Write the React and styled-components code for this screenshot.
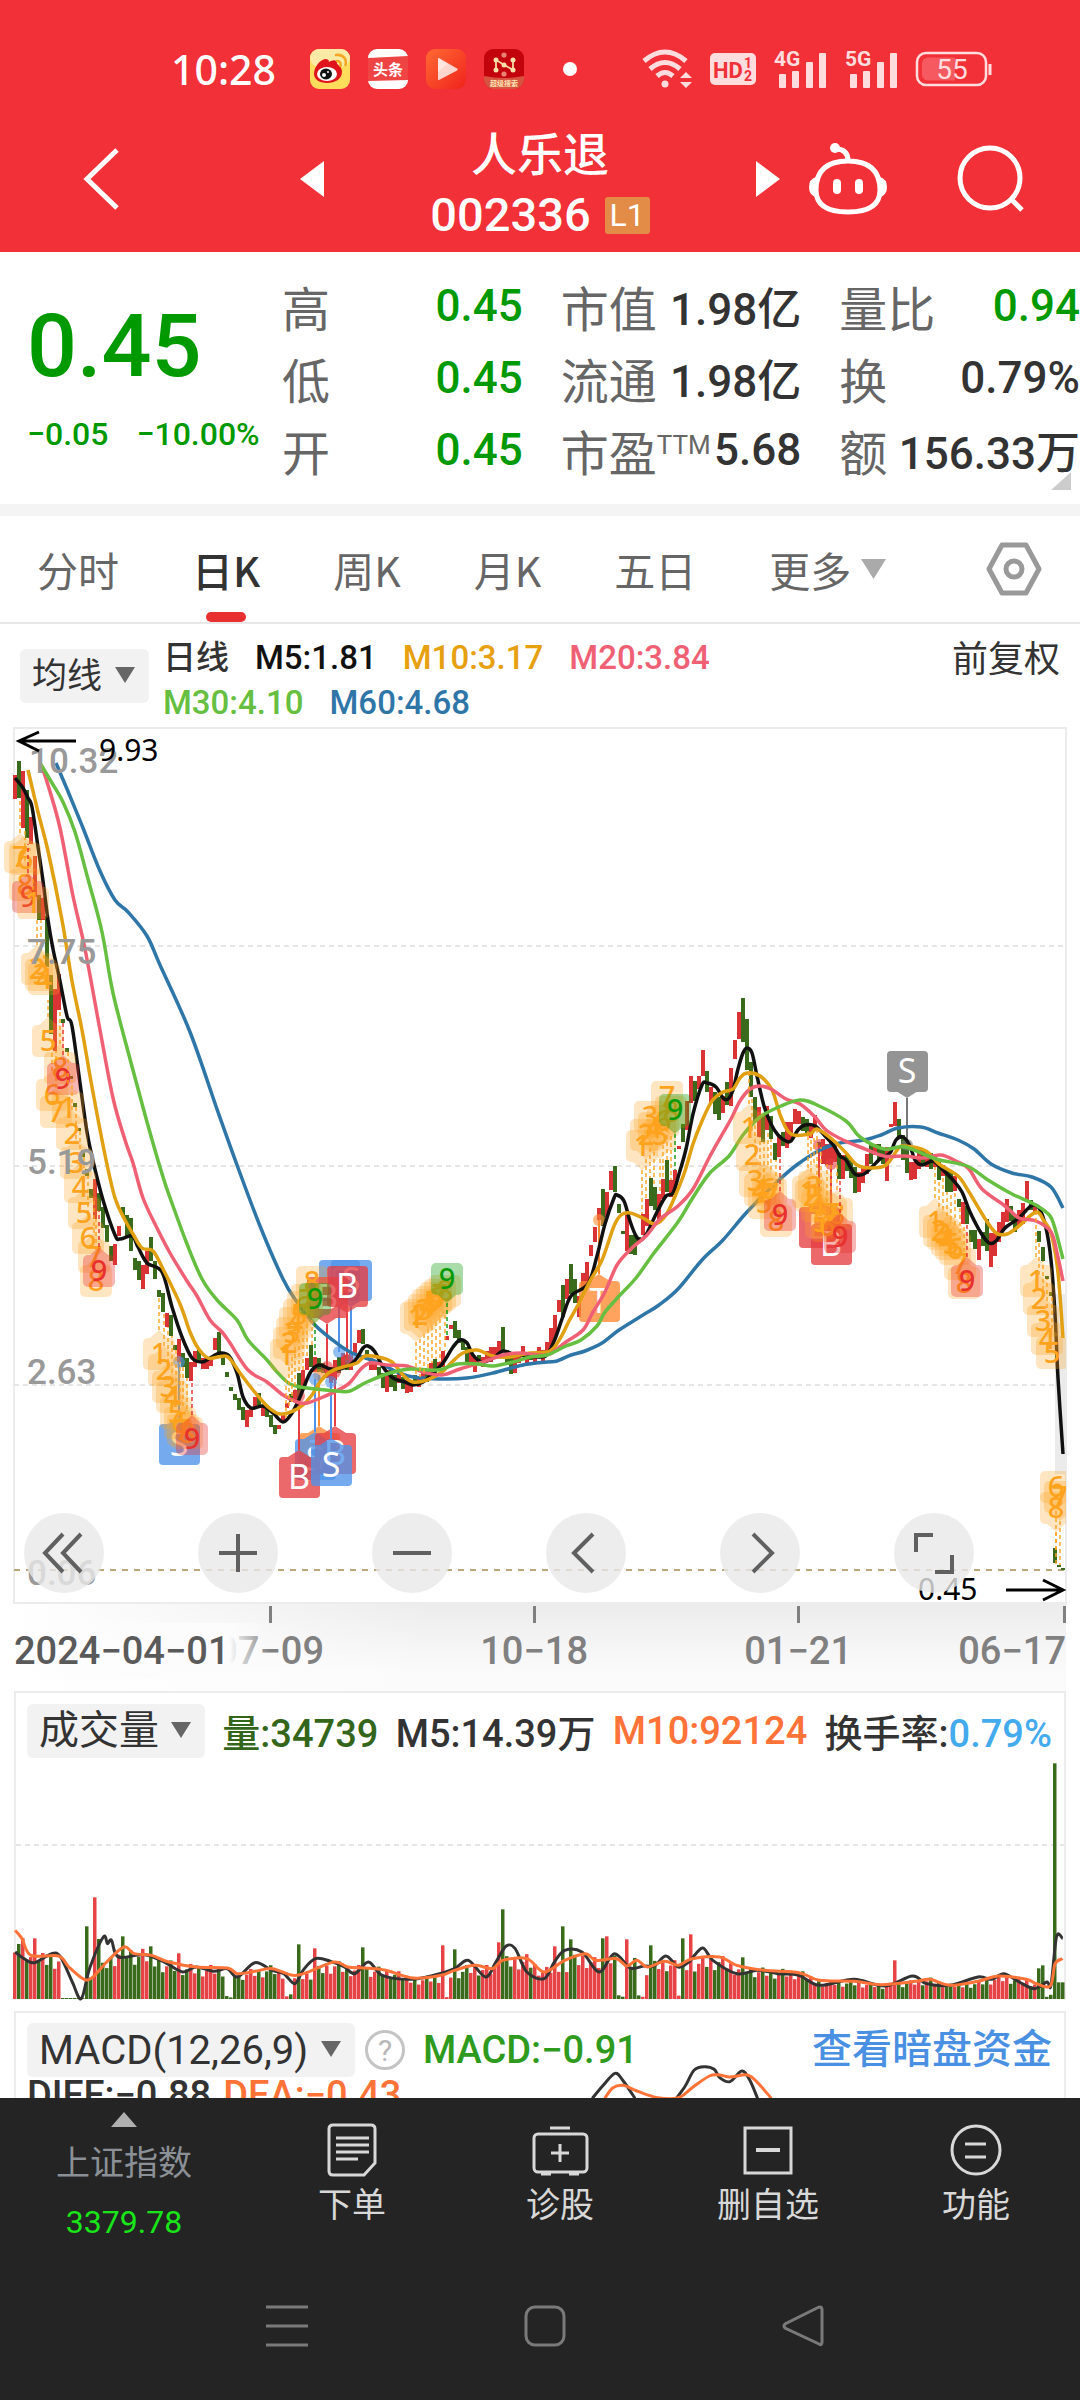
import React from "react";
import styled, { createGlobalStyle } from "styled-components";

const GlobalStyle = createGlobalStyle`
  * {
    box-sizing: border-box;
  }

  body {
    margin: 0;
    background: #ffffff;
    color: #333333;
    font-family: Roboto, "Noto Sans CJK SC", sans-serif;
    font-size: 36px;
  }

  button,
  select {
    font: inherit;
    color: inherit;
    border: none;
    background: none;
    padding: 0;
    margin: 0;
    cursor: pointer;
  }

  a {
    text-decoration: none;
  }

  svg {
    display: block;
    overflow: visible;
  }
`;

const Screen = styled.div`
  display: flex;
  flex-direction: column;
  height: 100vh;
  min-height: 800px;
`;

/* ---------- top ---------- */

const Top = styled.header`
  background: #f23037;
  color: #ffffff;
`;

const StatusBar = styled.div`
  display: flex;
  align-items: center;
  justify-content: space-between;
  height: 110px;
  padding: 28px 88px 0 171px;
`;

const StatusGroup = styled.div`
  display: flex;
  align-items: center;
  gap: ${({ $gap }) => $gap}px;
`;

const Clock = styled.time`
  font-family: "Noto Sans", sans-serif;
  font-weight: 500;
  font-size: 41px;
  width: 121px;
`;

const Dot = styled.span`
  width: 14px;
  height: 14px;
  margin-left: 21px;
  border-radius: 50%;
  background: #ffffff;
`;

const TitleBar = styled.div`
  display: grid;
  grid-template-columns: 1fr 480px 1fr;
  align-items: center;
  height: 142px;
  padding-bottom: 4px;
`;

const TitleSide = styled.div`
  display: flex;
  align-items: center;
  justify-content: space-between;
  padding: 0 ${({ $right }) => $right}px 0 ${({ $left }) => $left}px;
`;

const TitleCenter = styled.div`
  display: flex;
  align-items: center;
  justify-content: space-between;
`;

const StockTitle = styled.h1`
  margin: 0;
  padding-top: 12px;
  text-align: center;
  font-weight: 500;
  font-size: 46px;
  line-height: 60px;
`;

const StockCode = styled.div`
  display: flex;
  align-items: center;
  gap: 14px;
  font-size: 47px;
`;

const LevelBadge = styled.span`
  width: 45px;
  height: 37px;
  border-radius: 3px;
  background: #e28c47;
  font-weight: 400;
  font-size: 32px;
  line-height: 37px;
`;

/* ---------- quote ---------- */

const Quote = styled.section`
  position: relative;
  display: flex;
  height: 264px;
  border-bottom: 12px solid #f4f4f4;
`;

const PriceBlock = styled.div`
  width: 282px;
  padding: 46px 0 0 27px;
  color: #009900;
  white-space: nowrap;
`;

const Price = styled.div`
  font-weight: 500;
  font-size: 88px;
  line-height: 96px;
`;

const Change = styled.div`
  display: flex;
  gap: 28px;
  padding-top: 16px;
  font-size: 32px;
  font-weight: 500;
  line-height: 48px;
`;

const Stats = styled.dl`
  display: grid;
  flex: 1;
  grid-template-columns: repeat(3, minmax(0, 1fr));
  grid-template-rows: repeat(3, 72px);
  column-gap: 38px;
  margin: 0;
  padding-top: 18px;
`;

const Stat = styled.div`
  display: flex;
  align-items: center;
  justify-content: space-between;
  white-space: nowrap;

  dt {
    color: #666666;
    font-size: 48px;
  }

  dd {
    margin: 0;
    color: ${({ $down }) => ($down ? "#009900" : "#333333")};
    font-size: 44px;
    font-weight: 500;
  }

  sup {
    font-size: 26px;
    line-height: 26px;
  }
`;

const Corner = styled.span`
  position: absolute;
  right: 9px;
  bottom: 14px;
  border-left: 20px solid transparent;
  border-bottom: 18px solid #cccccc;
`;

/* ---------- tabs ---------- */

const Tabs = styled.nav`
  display: flex;
  align-items: center;
  gap: 73px;
  height: 108px;
  padding: 0 38px 0 37px;
  border-bottom: 2px solid #e8e8e8;
`;

const Tab = styled.button`
  position: relative;
  display: flex;
  align-items: center;
  gap: 10px;
  height: 100%;
  color: ${({ $active }) => ($active ? "#333333" : "#666666")};
  font-family: "Noto Sans CJK SC", sans-serif;
  font-weight: ${({ $active }) => ($active ? 500 : 400)};
  font-size: 41px;
  white-space: nowrap;

  &::after {
    content: "";
    display: ${({ $active }) => ($active ? "block" : "none")};
    position: absolute;
    left: calc(50% - 20px);
    bottom: 0;
    width: 40px;
    height: 10px;
    border-radius: 5px;
    background: #e93030;
  }
`;

const Settings = styled.button`
  margin-left: auto;
`;

/* ---------- indicators ---------- */

const Picker = styled.label`
  position: relative;
  flex: none;
  height: 54px;
  border-radius: 6px;
  background: #f2f2f2;

  select {
    appearance: none;
    height: 100%;
    padding: 0 46px 0 12px;
    outline: none;
    font-size: ${({ $size }) => $size}px;
  }

  svg {
    position: absolute;
    right: 14px;
    top: 18px;
    pointer-events: none;
  }
`;

const Averages = styled.div`
  display: flex;
  height: 103px;
  padding: 0 20px;
`;

const AveragePicker = styled.div`
  display: flex;
  padding-top: 25px;
`;

const AverageList = styled.div`
  display: flex;
  flex-wrap: wrap;
  align-content: flex-start;
  column-gap: 26px;
  width: 590px;
  padding: 11px 0 0 14px;
  font-size: 33px;
  line-height: 45px;
`;

const Value = styled.span`
  color: ${({ $color }) => $color};
  font-weight: 500;
  white-space: nowrap;
`;

const Adjust = styled.button`
  align-self: flex-start;
  margin-left: auto;
  margin-top: 6px;
  font-size: 36px;
`;

/* ---------- charts ---------- */

const Body = styled.main`
  flex: 1;
  min-height: 0;
  overflow: hidden;
`;

const ChartWrap = styled.section`
  position: relative;
`;

const ChartSvg = styled.svg`
  width: 100%;
  height: auto;
`;

const Controls = styled.div`
  position: absolute;
  left: 24px;
  right: 106px;
  bottom: 11px;
  display: flex;
  justify-content: space-between;
`;

const Control = styled.button`
  display: grid;
  place-items: center;
  width: 80px;
  height: 80px;
  border-radius: 50%;
  background: rgba(232, 232, 232, 0.8);
`;

const DateAxis = styled.div`
  position: relative;
  display: grid;
  grid-template-columns: 310fr 264fr 264fr 214fr;
  height: 87px;
  margin: 0 14px;
  background: linear-gradient(90deg, #ffffff 0%, rgba(255, 255, 255, 0) 40%),
    linear-gradient(180deg, #ececec 0%, #fbfbfb 80%);
  color: #808080;
  font-size: 38px;
  font-weight: 500;
  line-height: 56px;
`;

const StartDate = styled.span`
  position: absolute;
  left: 0;
  top: 19px;
  padding-right: 40px;
  background: linear-gradient(90deg, rgba(252, 252, 252, 0) 0%, #fcfcfc 60%, #fcfcfc 84%, rgba(252, 252, 252, 0) 100%);
  color: #5a5a5a;
`;

const DateMark = styled.span`
  position: relative;
  padding-top: 19px;
  text-align: right;
  white-space: nowrap;

  &::before {
    content: "";
    position: absolute;
    top: 2px;
    right: ${({ $tick }) => $tick || 0}px;
    width: 3px;
    height: 17px;
    background: #808080;
  }
`;

const Panel = styled.section`
  margin: 0 14px ${({ $gap }) => $gap || 0}px;
  border: 2px solid #ececec;
  border-bottom: none;
`;

const PanelHead = styled.div`
  display: flex;
  align-items: center;
  justify-content: space-between;
  padding: 10px 12px 0 11px;
  font-size: 38px;
  white-space: nowrap;
`;

const HeadGroup = styled.div`
  display: flex;
  align-items: center;
`;

const Help = styled.button`
  width: 40px;
  height: 40px;
  margin: 0 18px 0 10px;
  border: 3px solid #c4c4c4;
  border-radius: 50%;
  color: #b8b8b8;
  font-size: 30px;
  line-height: 33px;
`;

const DarkPool = styled.a`
  color: #4a90e2;
  font-size: 40px;
  font-weight: 500;
  line-height: 54px;
`;

const MacdBody = styled.div`
  position: relative;
  display: flex;
  gap: 12px;
  padding-left: 11px;
  font-size: 38px;
  line-height: 36px;
`;

const MacdSvg = styled.svg`
  position: absolute;
  left: 0;
  bottom: 0;
  width: 100%;
  height: auto;
`;

/* ---------- bottom ---------- */

const Bottom = styled.footer`
  flex: none;
  background: #242424;
`;

const Actions = styled.nav`
  display: grid;
  grid-template-columns: 248px repeat(4, 1fr);
  height: 156px;
`;

const Action = styled.button`
  display: flex;
  flex-direction: column;
  align-items: center;
  gap: 2px;
  padding-top: 24px;
  color: #d8d8d8;
  font-size: 34px;
  line-height: 50px;
`;

const ActionIcon = styled.svg`
  width: 56px;
  height: 56px;
`;

const IndexLink = styled.a`
  display: flex;
  flex-direction: column;
  align-items: center;
  padding-top: 14px;
  color: #8b9096;
  font-size: 34px;
  line-height: 50px;

  strong {
    padding-top: 9px;
    color: #19e619;
    font-weight: 400;
    font-size: 32px;
  }

  svg {
    margin-bottom: 11px;
  }
`;

const SystemNav = styled.div`
  display: flex;
  align-items: center;
  justify-content: space-between;
  height: 146px;
  padding: 0 256px 2px 266px;
`;

/* ---------- data ---------- */

const averages = [
  { label: "日线", color: "#333333" },
  { label: "M5:1.81", color: "#111111" },
  { label: "M10:3.17", color: "#e6a010" },
  { label: "M20:3.84", color: "#f06075" },
  { label: "M30:4.10", color: "#66bf40" },
  { label: "M60:4.68", color: "#2f76a8" },
];

const stats = [
  { name: "高", value: "0.45", down: true },
  { name: "市值", value: "1.98亿" },
  { name: "量比", value: "0.94", down: true },
  { name: "低", value: "0.45", down: true },
  { name: "流通", value: "1.98亿" },
  { name: "换", value: "0.79%" },
  { name: "开", value: "0.45", down: true },
  { name: "市盈", sup: "TTM", value: "5.68" },
  { name: "额", value: "156.33万" },
];

// colour, x, top, bottom
const candles = `r15 775 799,g19 761 798,r23 771 828,g27 790 838,r31 817 844,r35 856 897,g39 895 920,r43 898 920,g47 916 967,g51 975 1034,r55 989 1051,r59 974 1010,g63 1019 1023,g67 1048 1052,g71 1076 1079,g75 1103 1107,g79 1128 1131,g83 1150 1157,g87 1169 1176,g91 1189 1198,r95 1179 1219,g99 1193 1211,g103 1207 1228,g107 1225 1242,g111 1246 1261,r115 1244 1265,r119 1226 1236,g123 1207 1216,g127 1215 1238,g131 1218 1251,g135 1258 1270,g139 1261 1280,r143 1265 1289,r147 1251 1274,g151 1237 1261,g155 1261 1279,g159 1290 1297,g163 1293 1312,r167 1313 1327,g171 1315 1336,g175 1345 1350,r179 1339 1362,g183 1353 1367,g187 1358 1378,r191 1362 1381,r195 1351 1367,g199 1349 1363,r203 1358 1369,r207 1358 1369,r211 1357 1366,r215 1338 1350,g219 1332 1355,g223 1352 1365,g227 1372 1377,g231 1387 1391,g235 1394 1400,g239 1398 1410,g243 1407 1420,r247 1410 1427,r251 1408 1417,r255 1397 1407,g259 1393 1405,r263 1405 1416,g267 1405 1417,g271 1415 1427,g275 1425 1434,r279 1425 1429,r283 1415 1420,r287 1403 1408,g291 1394 1402,r295 1390 1400,g299 1373 1398,r303 1370 1390,r307 1358 1370,g311 1345 1367,r315 1357 1372,g319 1358 1372,g323 1363 1373,r327 1367 1378,r331 1367 1383,r335 1360 1380,g339 1357 1373,r343 1353 1367,g347 1355 1370,r351 1352 1370,r355 1343 1355,r359 1330 1343,g363 1329 1344,g367 1350 1360,r371 1358 1370,r375 1362 1370,g379 1367 1377,g383 1373 1388,r387 1370 1392,g391 1368 1387,g395 1375 1391,r399 1370 1383,g403 1377 1389,r407 1380 1393,r411 1380 1392,g415 1375 1383,r419 1377 1387,r423 1373 1383,g427 1370 1382,r431 1363 1377,g435 1359 1375,r439 1362 1370,r443 1351 1367,r447 1336 1340,r451 1325 1329,g455 1321 1338,g459 1330 1343,g463 1339 1350,g467 1347 1363,r471 1352 1365,r475 1357 1372,g479 1355 1365,r483 1357 1367,r487 1351 1362,r491 1347 1362,r495 1347 1357,r499 1341 1355,g503 1327 1350,g507 1350 1365,g511 1353 1374,r515 1353 1373,r519 1352 1363,r523 1346 1357,r527 1352 1363,g531 1353 1360,r535 1352 1363,r539 1347 1358,r543 1350 1362,r547 1342 1355,r551 1328 1347,r555 1315 1339,r559 1300 1312,g563 1285 1317,r567 1279 1299,g571 1264 1294,g575 1279 1303,r579 1296 1317,r583 1273 1287,r587 1262 1285,r591 1245 1256,r595 1227 1242,r599 1208 1220,g603 1189 1226,r607 1192 1217,r611 1171 1190,g615 1166 1192,g619 1204 1213,g623 1231 1234,r627 1215 1251,g631 1235 1254,g635 1235 1255,g639 1237 1242,r643 1214 1235,r647 1199 1226,g651 1178 1206,g655 1187 1210,r659 1194 1219,r663 1179 1199,g667 1160 1192,r671 1180 1197,r675 1170 1192,r679 1146 1149,g683 1124 1142,r687 1101 1130,r691 1076 1103,g695 1081 1101,r699 1076 1089,r703 1050 1076,g707 1071 1092,r711 1087 1103,g715 1092 1114,g719 1097 1120,r723 1096 1113,g727 1082 1105,r731 1068 1106,r735 1040 1059,r739 1012 1039,g743 998 1042,g747 1019 1070,g751 1062 1097,g755 1097 1122,r759 1107 1137,g763 1114 1142,r767 1106 1130,g771 1116 1139,g775 1143 1160,r779 1137 1157,g783 1132 1146,r787 1122 1148,r791 1122 1140,r795 1109 1124,r799 1111 1124,g803 1117 1131,g807 1119 1135,r811 1124 1138,r815 1115 1130,g819 1142 1147,r823 1139 1164,r827 1144 1165,r831 1139 1165,r835 1146 1162,g839 1153 1179,r843 1155 1179,g847 1155 1171,g851 1160 1178,g855 1167 1193,r859 1172 1192,r863 1167 1183,r867 1154 1174,g871 1144 1164,r875 1144 1155,g879 1144 1160,g883 1149 1164,r887 1147 1181,r891 1124 1127,r895 1102 1126,g899 1119 1139,g903 1135 1160,g907 1140 1173,r911 1162 1180,r915 1162 1179,r919 1147 1169,g923 1149 1165,r927 1151 1167,g931 1153 1169,r935 1155 1167,g939 1162 1180,r943 1165 1176,g947 1169 1192,g951 1171 1192,r955 1176 1191,g959 1199 1207,r963 1202 1224,g967 1206 1224,g971 1230 1242,g975 1230 1249,r979 1239 1260,g983 1232 1246,g987 1219 1251,r991 1233 1267,r995 1233 1256,r999 1222 1242,r1003 1212 1231,r1007 1199 1222,g1011 1206 1221,g1015 1215 1232,r1019 1210 1225,r1023 1203 1224,r1027 1181 1201,g1031 1200 1210,r1035 1205 1212,g1039 1231 1242,g1043 1247 1261,g1047 1276 1279,g1051 1292 1296,g1055 1548 1563,g1059 1565 1567,g1063 1568 1570`
  .split(",")
  .map((item) => {
    const [x, top, bottom] = item.slice(1).split(" ").map(Number);
    return { up: item[0] === "r", x, top, bottom };
  });

const lines = [
  {
    color: "#2f76a8",
    points:
      "56,763 67,789 83,828 100,871 115,900 128,912 147,936 160,965 190,1032 218,1112 237,1165 260,1226 283,1279 297,1302 313,1323 330,1338 350,1352 377,1362 397,1372 413,1377 440,1379 467,1378 493,1373 523,1365 547,1362 557,1361 571,1355 585,1351 602,1343 619,1330 643,1315 659,1305 678,1289 702,1260 723,1240 747,1212 778,1181 798,1164 822,1149 840,1143 864,1140 881,1135 898,1128 921,1127 938,1133 958,1140 974,1149 991,1164 1012,1173 1032,1177 1051,1187 1063,1208",
  },
  {
    color: "#111111",
    points:
      "15,778 23,788 28,798 32,807 38,847 43,881 48,920 53,949 60,981 67,1016 72,1026 80,1083 87,1132 93,1161 103,1200 115,1235 120,1239 132,1236 138,1247 147,1263 162,1272 172,1307 182,1337 192,1358 202,1362 210,1358 220,1353 229,1356 237,1373 243,1397 251,1408 263,1406 273,1413 283,1422 292,1413 300,1397 310,1373 319,1365 330,1369 340,1369 350,1365 357,1358 363,1348 368,1346 375,1352 383,1367 393,1378 405,1382 413,1385 423,1382 433,1373 443,1363 453,1347 460,1340 467,1343 473,1355 482,1362 493,1358 503,1351 513,1354 527,1356 540,1357 547,1355 555,1339 562,1319 571,1296 588,1284 597,1256 605,1224 614,1198 617,1195 624,1201 630,1221 636,1236 641,1240 647,1233 657,1212 666,1196 673,1193 679,1174 686,1149 693,1114 702,1085 707,1083 716,1087 723,1098 728,1099 733,1090 738,1069 743,1053 747,1048 752,1053 757,1076 764,1106 771,1124 778,1135 786,1141 791,1141 798,1130 805,1125 815,1126 826,1137 834,1146 840,1156 846,1160 855,1174 864,1174 872,1167 881,1158 890,1153 896,1140 903,1137 910,1146 915,1160 922,1165 933,1161 941,1168 953,1180 962,1192 970,1212 981,1233 989,1243 996,1241 1005,1228 1019,1218 1031,1206 1039,1208 1046,1228 1051,1260 1055,1314 1058,1378 1063,1454",
  },
  {
    color: "#e0a012",
    points:
      "28,770 38,812 48,851 62,920 72,981 82,1030 92,1087 105,1155 115,1198 125,1220 133,1234 142,1248 153,1251 163,1269 180,1304 190,1332 198,1348 208,1358 218,1357 228,1357 240,1373 253,1390 268,1407 280,1414 293,1411 303,1405 312,1395 320,1382 330,1372 343,1367 357,1363 365,1356 378,1357 392,1362 403,1375 413,1382 427,1380 442,1372 452,1362 463,1353 477,1350 493,1356 510,1357 530,1353 550,1351 561,1337 569,1321 578,1305 590,1281 602,1260 614,1226 621,1215 630,1213 643,1218 655,1224 666,1215 676,1194 685,1171 693,1144 702,1121 712,1101 723,1092 733,1089 740,1078 747,1073 760,1076 772,1090 781,1117 791,1134 810,1134 817,1129 833,1140 846,1153 857,1165 871,1168 886,1165 898,1149 905,1146 926,1151 939,1164 958,1176 969,1192 984,1217 996,1233 1007,1234 1019,1226 1036,1212 1044,1221 1051,1233 1057,1264 1060,1296 1063,1338",
  },
  {
    color: "#f06075",
    points:
      "42,767 48,785 60,828 73,896 85,949 100,1030 113,1098 125,1140 133,1163 143,1198 157,1228 170,1253 187,1281 197,1296 210,1320 222,1332 230,1343 248,1370 267,1382 283,1395 297,1402 307,1403 323,1397 347,1385 360,1370 370,1363 387,1365 407,1366 423,1372 442,1375 460,1369 483,1362 503,1355 520,1353 540,1355 550,1354 566,1342 583,1330 593,1312 605,1292 617,1265 631,1249 647,1235 660,1219 678,1206 693,1189 709,1158 723,1133 731,1119 740,1101 750,1089 760,1086 771,1089 786,1099 800,1104 815,1117 826,1130 843,1140 860,1147 884,1156 905,1156 922,1158 941,1155 958,1162 969,1169 982,1189 1005,1206 1019,1218 1036,1221 1051,1232 1057,1253 1063,1281",
  },
  {
    color: "#66bf40",
    points:
      "40,763 52,783 63,802 75,832 88,879 102,932 113,993 130,1059 147,1122 163,1177 173,1206 187,1244 202,1279 217,1300 237,1320 248,1340 267,1360 277,1372 290,1384 307,1388 337,1391 350,1391 367,1382 390,1373 410,1369 437,1370 457,1364 477,1364 493,1366 513,1362 530,1357 547,1355 566,1346 581,1340 597,1326 605,1312 621,1294 636,1278 654,1253 678,1222 692,1199 709,1174 729,1156 743,1135 760,1117 781,1106 800,1100 817,1105 846,1121 860,1137 884,1149 905,1147 936,1159 967,1166 988,1180 1012,1194 1032,1203 1046,1212 1053,1222 1063,1259",
  },
];

// [digit, x, y, end of the dotted stem]
const turns = [
  [7, 20, 857, 800], [6, 25, 859, 828], [8, 25, 885, 838], [9, 28, 897, 844], [1, 33, 903, 897],
  [2, 37, 969, 920], [3, 41, 975, 920], [4, 44, 979, 967], [5, 48, 1041, 1000], [8, 60, 1068, 1010],
  [6, 52, 1095, 1040], [7, 56, 1112, 1051], [9, 63, 1079, 1023], [1, 68, 1108, 1052], [2, 72, 1134, 1080],
  [3, 76, 1163, 1107], [4, 80, 1187, 1131], [5, 84, 1213, 1157], [6, 88, 1238, 1176], [7, 94, 1257, 1198],
  [8, 96, 1281, 1219], [9, 99, 1271, 1211],
  [1, 159, 1354, 1297], [2, 164, 1370, 1312], [3, 168, 1387, 1327], [4, 172, 1397, 1336], [5, 176, 1413, 1350],
  [6, 180, 1423, 1362], [7, 183, 1430, 1367], [8, 187, 1433, 1378], [9, 192, 1439, 1381],
  [1, 286, 1355, 1420], [2, 289, 1343, 1408], [3, 292, 1333, 1402], [4, 295, 1323, 1390], [5, 299, 1315, 1373],
  [6, 303, 1307, 1370], [7, 307, 1300, 1358], [8, 312, 1282, 1345], [9, 315, 1299, 1357],
  [1, 416, 1318, 1375], [2, 420, 1315, 1377], [3, 424, 1310, 1373], [4, 428, 1305, 1370], [5, 432, 1302, 1363],
  [6, 436, 1298, 1359], [7, 440, 1295, 1362], [8, 445, 1291, 1351], [9, 447, 1279, 1336],
  [1, 642, 1146, 1214], [2, 646, 1135, 1199], [3, 650, 1117, 1178], [4, 654, 1128, 1187], [5, 660, 1135, 1194],
  [6, 663, 1121, 1179], [7, 667, 1097, 1160], [8, 671, 1112, 1180], [9, 675, 1110, 1170],
  [1, 749, 1128, 1070], [2, 752, 1155, 1097], [3, 755, 1181, 1122], [4, 760, 1190, 1137], [5, 764, 1203, 1142],
  [6, 768, 1189, 1130], [7, 771, 1194, 1139], [8, 776, 1221, 1160], [9, 780, 1215, 1157],
  [1, 808, 1192, 1131], [2, 811, 1196, 1135], [3, 814, 1187, 1138], [4, 817, 1206, 1130], [5, 821, 1222, 1147],
  [6, 827, 1226, 1164], [7, 831, 1214, 1165], [8, 837, 1214, 1162], [9, 840, 1237, 1179],
  [1, 935, 1222, 1167], [2, 939, 1231, 1180], [3, 943, 1234, 1176], [4, 947, 1240, 1192], [5, 951, 1244, 1192],
  [6, 955, 1249, 1191], [7, 960, 1264, 1207], [8, 964, 1283, 1224], [9, 967, 1281, 1224],
  [1, 1036, 1281, 1212], [2, 1039, 1299, 1242], [3, 1043, 1321, 1261], [4, 1047, 1339, 1279], [5, 1052, 1353, 1296],
  [6, 1056, 1487, 1550], [7, 1060, 1497, 1565], [8, 1056, 1508, 1567],
];

// [letter, x, y, stem end, colour]
const trades = [
  ["S", 179, 1444, 1362, "#4f94ea"],
  ["S", 339, 1280, 1352, "#4f94ea"],
  ["S", 351, 1280, 1360, "#4f94ea"],
  ["B", 327, 1297, 1367, "#e63e42"],
  ["B", 347, 1286, 1360, "#e63e42"],
  ["T", 319, 1453, 1375, "#ff8a33"],
  ["S", 315, 1459, 1379, "#4f94ea"],
  ["B", 335, 1453, 1372, "#e63e42"],
  ["B", 299, 1477, 1396, "#e63e42"],
  ["S", 331, 1465, 1382, "#4f94ea"],
  ["T", 599, 1301, 1220, "#ff8a33"],
  ["B", 819, 1227, 1145, "#e63e42"],
  ["B", 831, 1244, 1164, "#e63e42"],
  ["S", 907, 1071, 1145, "#777777"],
];

const volumeM5 =
  "22,780 35,800 50,812 75,785 88,795 105,870 118,920 130,830 150,735 156,755 162,745 172,795 210,788 240,812 265,840 285,825 310,838 330,830 345,855 370,812 395,835 412,845 428,875 440,835 458,800 480,808 500,825 515,845 535,810 555,850 595,862 630,850 660,830 680,805 705,855 720,810 735,762 748,770 765,840 790,860 805,810 820,775 845,780 870,840 892,785 915,828 935,822 950,822 967,792 985,825 1000,810 1020,768 1035,805 1070,845 1100,835 1130,845 1160,850 1190,880 1240,862 1285,882 1325,852 1345,875 1380,880 1420,855 1440,862 1458,845 1480,870 1502,890 1520,870 1526,880 1534,735 1543,740";
const volumeM10 =
  "22,715 32,740 45,790 85,792 100,825 122,862 135,855 155,810 180,765 195,785 220,790 245,810 285,825 330,828 345,845 370,838 395,830 425,850 445,842 485,810 505,825 530,828 560,835 600,858 640,850 660,835 690,820 715,830 730,805 765,800 790,840 820,805 850,785 865,805 895,800 910,822 925,805 940,825 965,808 985,820 1005,800 1045,795 1070,820 1110,835 1160,842 1190,865 1240,868 1280,878 1330,868 1350,862 1380,880 1420,868 1450,852 1490,862 1505,875 1525,882 1532,815 1543,800";
const volumeSpikes = {
  51: 738, 126: 702, 138: 615, 143: 740, 178: 732, 219: 762, 260: 783, 433: 756, 457: 768, 527: 765, 643: 759,
  660: 771, 724: 750, 730: 651, 805: 762, 817: 702, 829: 741, 875: 738, 881: 732, 910: 741, 945: 759, 992: 738,
  1003: 726, 1080: 795, 1299: 804, 1509: 828, 1514: 819, 1532: 213,
};
const redSpikes = ["51", "138", "260", "457", "643", "724", "805", "881", "910", "1003", "1299"];
const quietDays = [330, 335, 417, 423, 649, 899, 905, 928, 934, 986, 1520, 1526];
const macdDiff = [
  "860,1222 875,1185 893,1147 905,1170 922,1222",
  "982,1222 995,1185 1008,1137 1023,1127 1037,1135 1045,1160 1060,1172 1077,1140 1088,1165 1100,1222",
];
const macdDea =
  "878,1222 890,1190 905,1183 925,1200 955,1220 985,1220 1005,1190 1030,1155 1045,1152 1060,1158 1085,1152 1100,1175 1120,1222";

const parse = (points) => points.split(" ").map((p) => p.split(",").map(Number));

// the lower charts are kept on a 1568 wide grid, three units per pixel down
const fit = ([x, y]) => [x / 1.452, y / 3];

// smooth path through the points
const smooth = (points) =>
  points.reduce((d, [x, y], i) => {
    if (i === 0) return `M${x} ${y}`;
    const [px, py] = points[i - 1];
    const [bx, by] = points[i - 2] || [px, py];
    const [nx, ny] = points[i + 1] || [x, y];
    return `${d}C${px + (x - bx) / 6} ${py + (y - by) / 6} ${x - (nx - px) / 6} ${y - (ny - py) / 6} ${x} ${y}`;
  }, "");

const levelAt = (points, x) => {
  const i = Math.max(1, points.findIndex(([px]) => px >= x));
  const [ax, ay] = points[i - 1];
  const [bx, by] = points[i];
  return ay + ((by - ay) * (x - ax)) / (bx - ax);
};

const bars = candles.map(({ x, up }, i) => {
  const grid = 22 + (i * 1521) / (candles.length - 1);
  const near = (list) => list.find((key) => Math.abs(Number(key) - grid) <= 2.9);
  const spike = near(Object.keys(volumeSpikes));
  const noise = ((i * 7919) % 101) / 101;
  const level = 920 - levelAt(parse(volumeM10), Math.min(grid, 1543));
  let height = level * (0.68 + noise * 0.46);
  let red = up;
  if (grid > 90 && grid < 122) height = 3;
  if (near(quietDays)) height = 14 - noise * 10;
  if (grid > 1533) height = 50;
  if (spike) {
    height = 920 - volumeSpikes[spike];
    red = redSpikes.includes(spike);
  }
  return { x, red, height: height / 3 };
});

/* ---------- drawings ---------- */

const Caret = ({ size = 20, color = "#666666" }) => (
  <svg width={size} height={size * 0.8} viewBox="0 0 20 16">
    <path d="M0 0h20L10 16z" fill={color} />
  </svg>
);

const AppIcon = ({ children }) => (
  <svg width="40" height="40" viewBox="0 0 40 40">
    {children}
  </svg>
);

const WeiboIcon = () => (
  <AppIcon>
    <rect width="40" height="40" rx="9" fill="#ffdc5c" />
    <rect width="40" height="18" rx="9" fill="#ffe9a6" />
    <path d="M4 25C4 18 10 11 15 10c3 0 4 1 4 3 3-2 8-3 8 1 0 2 5 3 5 9 0 7-7 11-15 11S4 30 4 25z" fill="#e1131c" />
    <ellipse cx="17" cy="25" rx="10" ry="7" fill="#fff" />
    <ellipse cx="16" cy="25" rx="6" ry="5.4" fill="#111" />
    <circle cx="14" cy="26" r="2" fill="#fff" />
    <circle cx="18" cy="23" r="1" fill="#fff" />
    <path d="M27 12c3 0 4 2 3.5 5M26 6c7-1 11 4 9.5 10" fill="none" stroke="#f5a623" strokeWidth="2.6" strokeLinecap="round" />
  </AppIcon>
);

const ToutiaoIcon = () => (
  <AppIcon>
    <rect width="40" height="40" rx="9" fill="#fff" />
    <path d="M0 9l40-2v24l-40 1z" fill="#ef4444" />
    <text x="20" y="26" fontSize="15" fontWeight="700" fill="#fff" textAnchor="middle">头条</text>
  </AppIcon>
);

const VideoIcon = () => (
  <AppIcon>
    <defs>
      <linearGradient id="video" x1="0" y1="0" x2="1" y2="1">
        <stop offset="0" stopColor="#ff6a33" />
        <stop offset="1" stopColor="#f0231c" />
      </linearGradient>
    </defs>
    <rect width="40" height="40" rx="9" fill="url(#video)" />
    <path d="M12 9.5v21q0 1 1 .5l18-9.5q1.5-1 0-2L13 9q-1 0-1 .5z" fill="#ffd5cd" />
    <path d="M12 9v14l9-8z" fill="#fff" opacity=".4" />
  </AppIcon>
);

const FinanceIcon = () => (
  <AppIcon>
    <rect width="40" height="40" rx="9" fill="#c4040c" />
    <path d="M0 27q20 4 40 0v4a9 9 0 0 1-9 9H9a9 9 0 0 1-9-9z" fill="#d8533f" />
    <path d="M12 21V11l17 10V11" fill="none" stroke="#f6d9a0" strokeWidth="1.8" />
    {[[12, 11], [12, 21], [20, 16], [29, 11], [29, 21]].map(([x, y]) => (
      <circle key={`${x}-${y}`} cx={x} cy={y} r="2.5" fill="#f9dfaa" />
    ))}
    <circle cx="20" cy="6" r="2.6" fill="#e88272" />
    <circle cx="20" cy="25" r="2.6" fill="#e88272" />
    <text x="20" y="37" fontSize="7" fontWeight="700" fill="#ffe5b5" textAnchor="middle">超级搜索</text>
  </AppIcon>
);

const WifiIcon = () => (
  <svg width="50" height="40" viewBox="0 0 50 40" fill="none" stroke="#ffdcde" strokeWidth="5">
    <path d="M2 12q21-18 42 0M8 20q15-13 30 0M15 27q8-7 16 0" />
    <circle cx="23" cy="35" r="3.5" fill="#ffdcde" stroke="none" />
    <path d="M38 29l6-6 6 6zM38 33l6 6 6-6z" fill="#ffdcde" stroke="none" />
  </svg>
);

const HdIcon = () => (
  <svg width="46" height="32" viewBox="0 0 46 32">
    <rect width="46" height="32" rx="5" fill="#ffdcde" />
    <g fill="#f23037" fontFamily="Roboto, sans-serif" fontWeight="700">
      <text x="3" y="25" fontSize="22">HD</text>
      <text x="34" y="15" fontSize="14">1</text>
      <text x="34" y="28" fontSize="14">2</text>
    </g>
  </svg>
);

const SignalIcon = ({ label }) => (
  <svg width="53" height="40" viewBox="0 0 53 40" fill="#ffdcde">
    <text x="0" y="17" fontSize="21" fontWeight="700" fontFamily="Roboto, sans-serif">{label}</text>
    <rect x="5" y="25" width="7" height="14" rx="1" />
    <rect x="18" y="22" width="7" height="17" rx="1" />
    <rect x="32" y="13" width="7" height="26" rx="1" />
    <rect x="45" y="4" width="7" height="35" rx="1" />
  </svg>
);

const BatteryIcon = () => (
  <svg width="76" height="34" viewBox="0 0 76 34">
    <rect x="1" y="1" width="69" height="32" rx="9" fill="none" stroke="#ffdcde" strokeWidth="2.5" />
    <path d="M39 5.5H12a6 6 0 0 0-6 6v11a6 6 0 0 0 6 6h27z" fill="#f65a60" />
    <path d="M74 12v11" stroke="#ffdcde" strokeWidth="3" />
    <text x="36" y="27" fontSize="28" fill="#ffdcde" textAnchor="middle" fontFamily="Roboto, sans-serif">55</text>
  </svg>
);

const RobotIcon = () => (
  <svg width="78" height="72" viewBox="0 0 78 72" fill="none" stroke="#fff" strokeWidth="5">
    <path d="M39 18c24 0 32 12 32 29 0 16-12 22-32 22S7 63 7 47c0-17 8-29 32-29z" />
    <path d="M39 18c0-8-4-12-12-12" />
    <circle cx="26" cy="5" r="5" fill="#fff" stroke="none" />
    <path d="M7 34q-7 2-7 10t7 10zM71 34q7 2 7 10t-7 10z" fill="#fff" stroke="none" />
    <path d="M28 40v7M50 40v7" strokeWidth="8" strokeLinecap="round" />
  </svg>
);

const SearchIcon = () => (
  <svg width="68" height="68" viewBox="0 0 68 68" fill="none" stroke="#fff" strokeWidth="5">
    <circle cx="33" cy="33" r="30" />
    <path d="M53 53l12 12" />
  </svg>
);

const TurnTag = ({ digit, x, y, stem }) => {
  const below = stem < y;
  const last = digit === 9;
  const color = last ? (below ? "#e8302c" : "#0a9a0a") : "#ffa31f";
  const tip = below ? y - 24 : y + 24;
  const base = below ? y - 16 : y + 16;
  return (
    <g>
      <path d={`M${x} ${tip}V${stem}`} stroke={color} strokeWidth="2" strokeDasharray="4 3" opacity=".7" />
      <g fill={color} opacity={last ? 0.35 : 0.27}>
        <rect x={x - 16} y={y - 16} width="32" height="32" rx="5" />
        <path d={`M${x - 9} ${base}L${x} ${tip}L${x + 9} ${base}z`} />
      </g>
      <text x={x} y={y + 10} fontSize="29" fontWeight="500" textAnchor="middle" fill={color}>{digit}</text>
    </g>
  );
};

const TradeTag = ({ letter, x, y, stem, color }) => {
  const below = stem < y;
  const tip = below ? y - 27 : y + 27;
  const base = below ? y - 20 : y + 20;
  return (
    <g>
      <path d={`M${x} ${tip}V${stem}`} stroke={color} strokeWidth="2" />
      <circle cx={x} cy={stem} r="6" fill={color} opacity=".6" />
      <g fill={color} opacity=".78">
        <rect x={x - 20} y={y - 20} width="41" height="41" rx="4" />
        <path d={`M${x - 11} ${base}L${x} ${tip}L${x + 11} ${base}z`} />
      </g>
      <text x={x} y={y + 12} fontSize="34" textAnchor="middle" fill="#fff">{letter}</text>
    </g>
  );
};

const PriceChart = () => (
  <ChartSvg viewBox="0 727 1080 877" fontFamily="Noto Sans, sans-serif" role="img" aria-label="日K">
    <clipPath id="plot">
      <rect x="0" y="727" width="1066" height="877" />
    </clipPath>
    <rect x="14" y="728" width="1052" height="875" fill="none" stroke="#ececec" strokeWidth="2" />
    <g stroke="#dedede" strokeWidth="1.5" strokeDasharray="5 4">
      <path d="M14 946H1066M14 1166H1066M14 1385H1066" />
    </g>
    <path d="M14 1570H1066" stroke="#b8a77c" strokeWidth="2" strokeDasharray="6 6" />
    <rect x="1055" y="1294" width="11" height="180" fill="#ebebeb" />
    <g clipPath="url(#plot)">
      {candles.map(({ x, up, top, bottom }) => (
        <rect key={x} x={x - 2} y={top} width="4" height={bottom - top} fill={up ? "#d93336" : "#3a6a1c"} />
      ))}
      {trades.map(([letter, x, y, stem, color]) => (
        <TradeTag key={`${x}-${y}`} letter={letter} x={x} y={y} stem={stem} color={color} />
      ))}
      {lines.map(({ color, points }) => (
        <path key={color} d={smooth(parse(points))} fill="none" stroke={color} strokeWidth="3.5" strokeLinejoin="round" />
      ))}
      {turns.map(([digit, x, y, stem]) => (
        <TurnTag key={`${x}-${y}`} digit={digit} x={x} y={y} stem={stem} />
      ))}
    </g>
    <g fill="#999999" fontSize="35" fontWeight="500" fontFamily="Roboto, sans-serif">
      <text x="29" y="773">10.32</text>
      <text x="27" y="964">7.75</text>
      <text x="27" y="1174">5.19</text>
      <text x="27" y="1384">2.63</text>
      <text x="27" y="1585">0.06</text>
    </g>
    <g fill="#000" fontSize="30">
      <text x="99" y="761">9.93</text>
      <text x="918" y="1600">0.45</text>
    </g>
    <path d="M76 741H20M39 732L19 741L39 751M1006 1590H1062M1043 1580L1063 1590L1043 1600" fill="none" stroke="#000" strokeWidth="3" />
  </ChartSvg>
);

const VolumeChart = () => (
  <ChartSvg viewBox="16 66 1048 242" role="img" aria-label="成交量">
    <path d="M16 153H1064" stroke="#dedede" strokeWidth="1.5" strokeDasharray="5 4" />
    {bars.map(({ x, red, height }) => (
      <rect key={x} x={x - 2} y={307 - height} width="3.5" height={height} fill={red ? "#e54345" : "#3a6a1c"} />
    ))}
    <path d={smooth(parse(volumeM5).map(fit))} fill="none" stroke="#333" strokeWidth="3" />
    <path d={smooth(parse(volumeM10).map(fit))} fill="none" stroke="#ff7238" strokeWidth="3" />
  </ChartSvg>
);

const MacdChart = () => (
  <MacdSvg viewBox="16 362 1048 60">
    {macdDiff.map((points) => (
      <path key={points} d={smooth(parse(points).map(fit))} fill="none" stroke="#333" strokeWidth="3" />
    ))}
    <path d={smooth(parse(macdDea).map(fit))} fill="none" stroke="#ff7238" strokeWidth="3" />
  </MacdSvg>
);

const ControlIcon = ({ d }) => (
  <svg width="44" height="44" viewBox="0 0 44 44" fill="none" stroke="#606060" strokeWidth="4">
    <path d={d} />
  </svg>
);

const controls = [
  { label: "最早", d: "M21 3L3 22L21 41M39 3L21 22L39 41" },
  { label: "放大", d: "M22 3V41M3 22H41" },
  { label: "缩小", d: "M3 22H41" },
  { label: "左移", d: "M29 3L10 22L29 41" },
  { label: "右移", d: "M15 3L34 22L15 41" },
  { label: "全屏", d: "M4 21V4H21M23 41H40V24" },
];

const actions = [
  {
    label: "下单",
    icon: (
      <>
        <path d="M9 3H47Q51 3 51 7V41L40 53H9Q5 53 5 49V7Q5 3 9 3z" />
        <path d="M12 16H45M12 23H45M12 30H45M12 37H34" />
      </>
    ),
  },
  {
    label: "诊股",
    icon: (
      <>
        <rect x="2" y="12" width="53" height="38" rx="4" />
        <path d="M18 6H38M28 22V40M19 31H37M9 52H19M37 52H47" />
      </>
    ),
  },
  {
    label: "删自选",
    icon: (
      <>
        <rect x="5" y="6" width="46" height="45" />
        <path d="M16 28H40" strokeWidth="4" />
      </>
    ),
  },
  {
    label: "功能",
    icon: (
      <>
        <circle cx="28" cy="28" r="24" />
        <path d="M17 22H38M17 35H38" />
      </>
    ),
  },
];

const Select = ({ label, size }) => (
  <Picker $size={size}>
    <select aria-label={label} defaultValue={label}>
      <option>{label}</option>
    </select>
    <Caret />
  </Picker>
);

const App = () => (
  <Screen>
    <GlobalStyle />
    <Top>
      <StatusBar>
        <StatusGroup $gap={18}>
          <Clock>10:28</Clock>
          <WeiboIcon />
          <ToutiaoIcon />
          <VideoIcon />
          <FinanceIcon />
          <Dot />
        </StatusGroup>
        <StatusGroup $gap={18}>
          <WifiIcon />
          <HdIcon />
          <SignalIcon label="4G" />
          <SignalIcon label="5G" />
          <BatteryIcon />
        </StatusGroup>
      </StatusBar>
      <TitleBar>
        <TitleSide $left={83} $right={0}>
          <button aria-label="返回">
            <svg width="36" height="64" viewBox="0 0 36 64" fill="none" stroke="#fff" strokeWidth="5">
              <path d="M34 3L4 32L34 61" />
            </svg>
          </button>
        </TitleSide>
        <TitleCenter>
          <button aria-label="上一只">
            <svg width="24" height="36" viewBox="0 0 24 36"><path d="M24 0v36L0 18z" fill="#fff" /></svg>
          </button>
          <StockTitle>
            人乐退
            <StockCode>
              002336
              <LevelBadge>L1</LevelBadge>
            </StockCode>
          </StockTitle>
          <button aria-label="下一只">
            <svg width="24" height="36" viewBox="0 0 24 36"><path d="M0 0v36l24-18z" fill="#fff" /></svg>
          </button>
        </TitleCenter>
        <TitleSide $left={29} $right={55}>
          <button aria-label="助手"><RobotIcon /></button>
          <button aria-label="搜索"><SearchIcon /></button>
        </TitleSide>
      </TitleBar>
    </Top>

    <Body>
      <Quote>
        <PriceBlock>
          <Price>0.45</Price>
          <Change>
            <span>−0.05</span>
            <span>−10.00%</span>
          </Change>
        </PriceBlock>
        <Stats>
          {stats.map(({ name, sup, value, down }) => (
            <Stat key={name} $down={down}>
              <dt>
                {name}
                {sup && <sup>{sup}</sup>}
              </dt>
              <dd>{value}</dd>
            </Stat>
          ))}
        </Stats>
        <Corner />
      </Quote>

      <Tabs>
        <Tab>分时</Tab>
        <Tab $active>日K</Tab>
        <Tab>周K</Tab>
        <Tab>月K</Tab>
        <Tab>五日</Tab>
        <Tab>
          更多
          <Caret size={25} color="#aaaaaa" />
        </Tab>
        <Settings aria-label="设置">
          <svg width="56" height="54" viewBox="0 0 56 54" fill="none" stroke="#999" strokeWidth="5">
            <path d="M16 3H40L53 27L40 51H16L3 27z" strokeLinejoin="round" />
            <circle cx="28" cy="27" r="8" />
          </svg>
        </Settings>
      </Tabs>

      <Averages>
        <AveragePicker>
          <Select label="均线" size={35} />
        </AveragePicker>
        <AverageList>
          {averages.map(({ label, color }) => (
            <Value key={label} $color={color}>{label}</Value>
          ))}
        </AverageList>
        <Adjust>前复权</Adjust>
      </Averages>

      <ChartWrap>
        <PriceChart />
        <Controls>
          {controls.map(({ label, d }) => (
            <Control key={label} aria-label={label}>
              <ControlIcon d={d} />
            </Control>
          ))}
        </Controls>
      </ChartWrap>

      <DateAxis>
        <DateMark $tick={52}>07−09</DateMark>
        <DateMark $tick={52}>10−18</DateMark>
        <DateMark $tick={52}>01−21</DateMark>
        <DateMark>06−17</DateMark>
        <StartDate>2024−04−01</StartDate>
      </DateAxis>

      <Panel $gap={11}>
        <PanelHead>
          <Select label="成交量" size={40} />
          <Value $color="#33661a">量:34739</Value>
          <Value $color="#333333">M5:14.39万</Value>
          <Value $color="#ff7238">M10:92124</Value>
          <Value $color="#333333">
            换手率:<Value $color="#44aaee">0.79%</Value>
          </Value>
        </PanelHead>
        <VolumeChart />
      </Panel>

      <Panel>
        <PanelHead>
          <HeadGroup>
            <Select label="MACD(12,26,9)" size={40} />
            <Help aria-label="帮助">?</Help>
            <Value $color="#2e9a1e">MACD:−0.91</Value>
          </HeadGroup>
          <DarkPool href="#dark">查看暗盘资金</DarkPool>
        </PanelHead>
        <MacdBody>
          <Value $color="#333333">DIFF:−0.88</Value>
          <Value $color="#ff7238">DEA:−0.43</Value>
          <MacdChart />
        </MacdBody>
      </Panel>
    </Body>

    <Bottom>
      <Actions>
        <IndexLink href="#index">
          <svg width="26" height="15" viewBox="0 0 26 15"><path d="M13 0l13 15H0z" fill="#b0b0b0" /></svg>
          上证指数
          <strong>3379.78</strong>
        </IndexLink>
        {actions.map(({ label, icon }) => (
          <Action key={label}>
            <ActionIcon viewBox="0 0 56 56" fill="none" stroke="#d8d8d8" strokeWidth="3">{icon}</ActionIcon>
            {label}
          </Action>
        ))}
      </Actions>
      <SystemNav>
        <button aria-label="任务">
          <svg width="42" height="42" viewBox="0 0 42 42" stroke="#7a7a7a" strokeWidth="3"><path d="M0 2H42M0 21H42M0 40H42" /></svg>
        </button>
        <button aria-label="主页">
          <svg width="42" height="42" viewBox="0 0 42 42" fill="none" stroke="#7a7a7a" strokeWidth="3"><rect x="2" y="2" width="38" height="38" rx="9" /></svg>
        </button>
        <button aria-label="后退">
          <svg width="42" height="42" viewBox="0 0 42 42" fill="none" stroke="#7a7a7a" strokeWidth="3"><path d="M38 2q2 0 2 3v32q0 4-3 2L3 23q-2-2 0-4L35 3q2-1 3-1z" /></svg>
        </button>
      </SystemNav>
    </Bottom>
  </Screen>
);

export default App;
